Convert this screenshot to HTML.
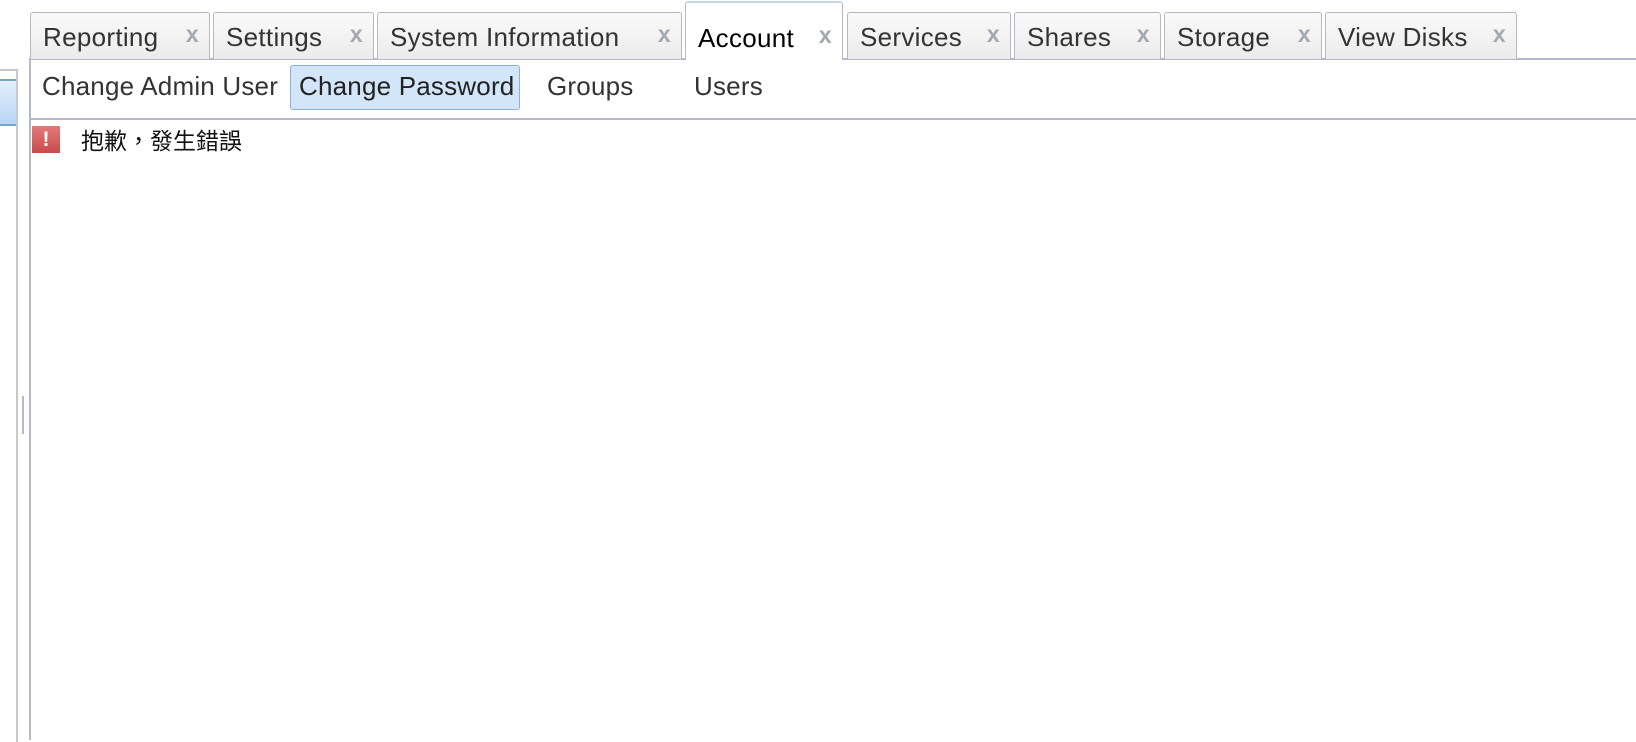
<!DOCTYPE html>
<html><head><meta charset="utf-8"><style>
body{margin:0;width:1636px;height:740px;background:#fff;position:relative;overflow:hidden;font-family:"Liberation Sans","Noto Sans CJK TC",sans-serif;}
.abs{position:absolute;}
.tab{position:absolute;top:12px;height:47px;border:1px solid #b5b8c8;border-bottom:none;border-radius:3px 3px 0 0;background:linear-gradient(#fafafa,#ebebeb);font-size:26px;letter-spacing:0.3px;color:#333;box-sizing:border-box;}
.tab span{position:absolute;left:12px;top:9px;white-space:nowrap;}
.tab i{position:absolute;right:10px;top:8px;font-style:normal;font-weight:bold;color:#a3a8b0;font-size:23px;}
.tab.act{top:1px;height:59px;background:#fff;border-top:2px solid #c5d6ea;color:#000;}
.tab.act span{top:20px}.tab.act i{top:19px}
.sub{position:absolute;top:71px;font-size:26px;letter-spacing:0.2px;color:#333;white-space:nowrap;}
</style></head><body>
<div class="abs" style="left:0;top:69px;width:16px;height:671px;border-top:2px solid #c8c8c8;border-right:2px solid #c8c8c8;"></div>
<div class="abs" style="left:0;top:79px;width:16px;height:47px;background:linear-gradient(#e3effc,#b9d6f5);border-top:2px solid #7da2c8;border-bottom:2px solid #7da2c8;box-sizing:border-box;"></div>
<div class="abs" style="left:22px;top:396px;width:2px;height:38px;background:#b5b8c8"></div>
<div class="abs" style="left:29px;top:58px;width:2px;height:682px;background:#b5b8c8"></div>
<div class="abs" style="left:29px;top:58px;width:1607px;height:2px;background:#b5b8c8"></div>
<div class="abs" style="left:29px;top:118px;width:1607px;height:2px;background:#b5b8c8"></div>
<div class="tab" style="left:30px;width:180px"><span>Reporting</span><i>x</i></div>
<div class="tab" style="left:213px;width:161px"><span>Settings</span><i>x</i></div>
<div class="tab" style="left:377px;width:305px"><span>System Information</span><i>x</i></div>
<div class="tab act" style="left:685px;width:158px"><span>Account</span><i>x</i></div>
<div class="tab" style="left:847px;width:164px"><span>Services</span><i>x</i></div>
<div class="tab" style="left:1014px;width:147px"><span>Shares</span><i>x</i></div>
<div class="tab" style="left:1164px;width:158px"><span>Storage</span><i>x</i></div>
<div class="tab" style="left:1325px;width:192px"><span>View Disks</span><i>x</i></div>
<div class="sub" style="left:42px">Change Admin User</div>
<div class="abs" style="left:290px;top:65px;width:230px;height:45px;box-sizing:border-box;border:1px solid #8fb0d6;border-radius:3px;background:#d3e5f8;"></div>
<div class="sub" style="left:299px;color:#222">Change Password</div>
<div class="sub" style="left:547px">Groups</div>
<div class="sub" style="left:694px">Users</div>
<div class="abs" style="left:32px;top:126px;width:28px;height:27px;background:linear-gradient(#e47a7a,#c94b4b);color:#fff;font-weight:bold;font-size:21px;text-align:center;line-height:27px;">!</div>
<div class="abs" style="left:81px;top:122px;font-size:23px;color:#111;">抱歉，發生錯誤</div>
</body></html>
